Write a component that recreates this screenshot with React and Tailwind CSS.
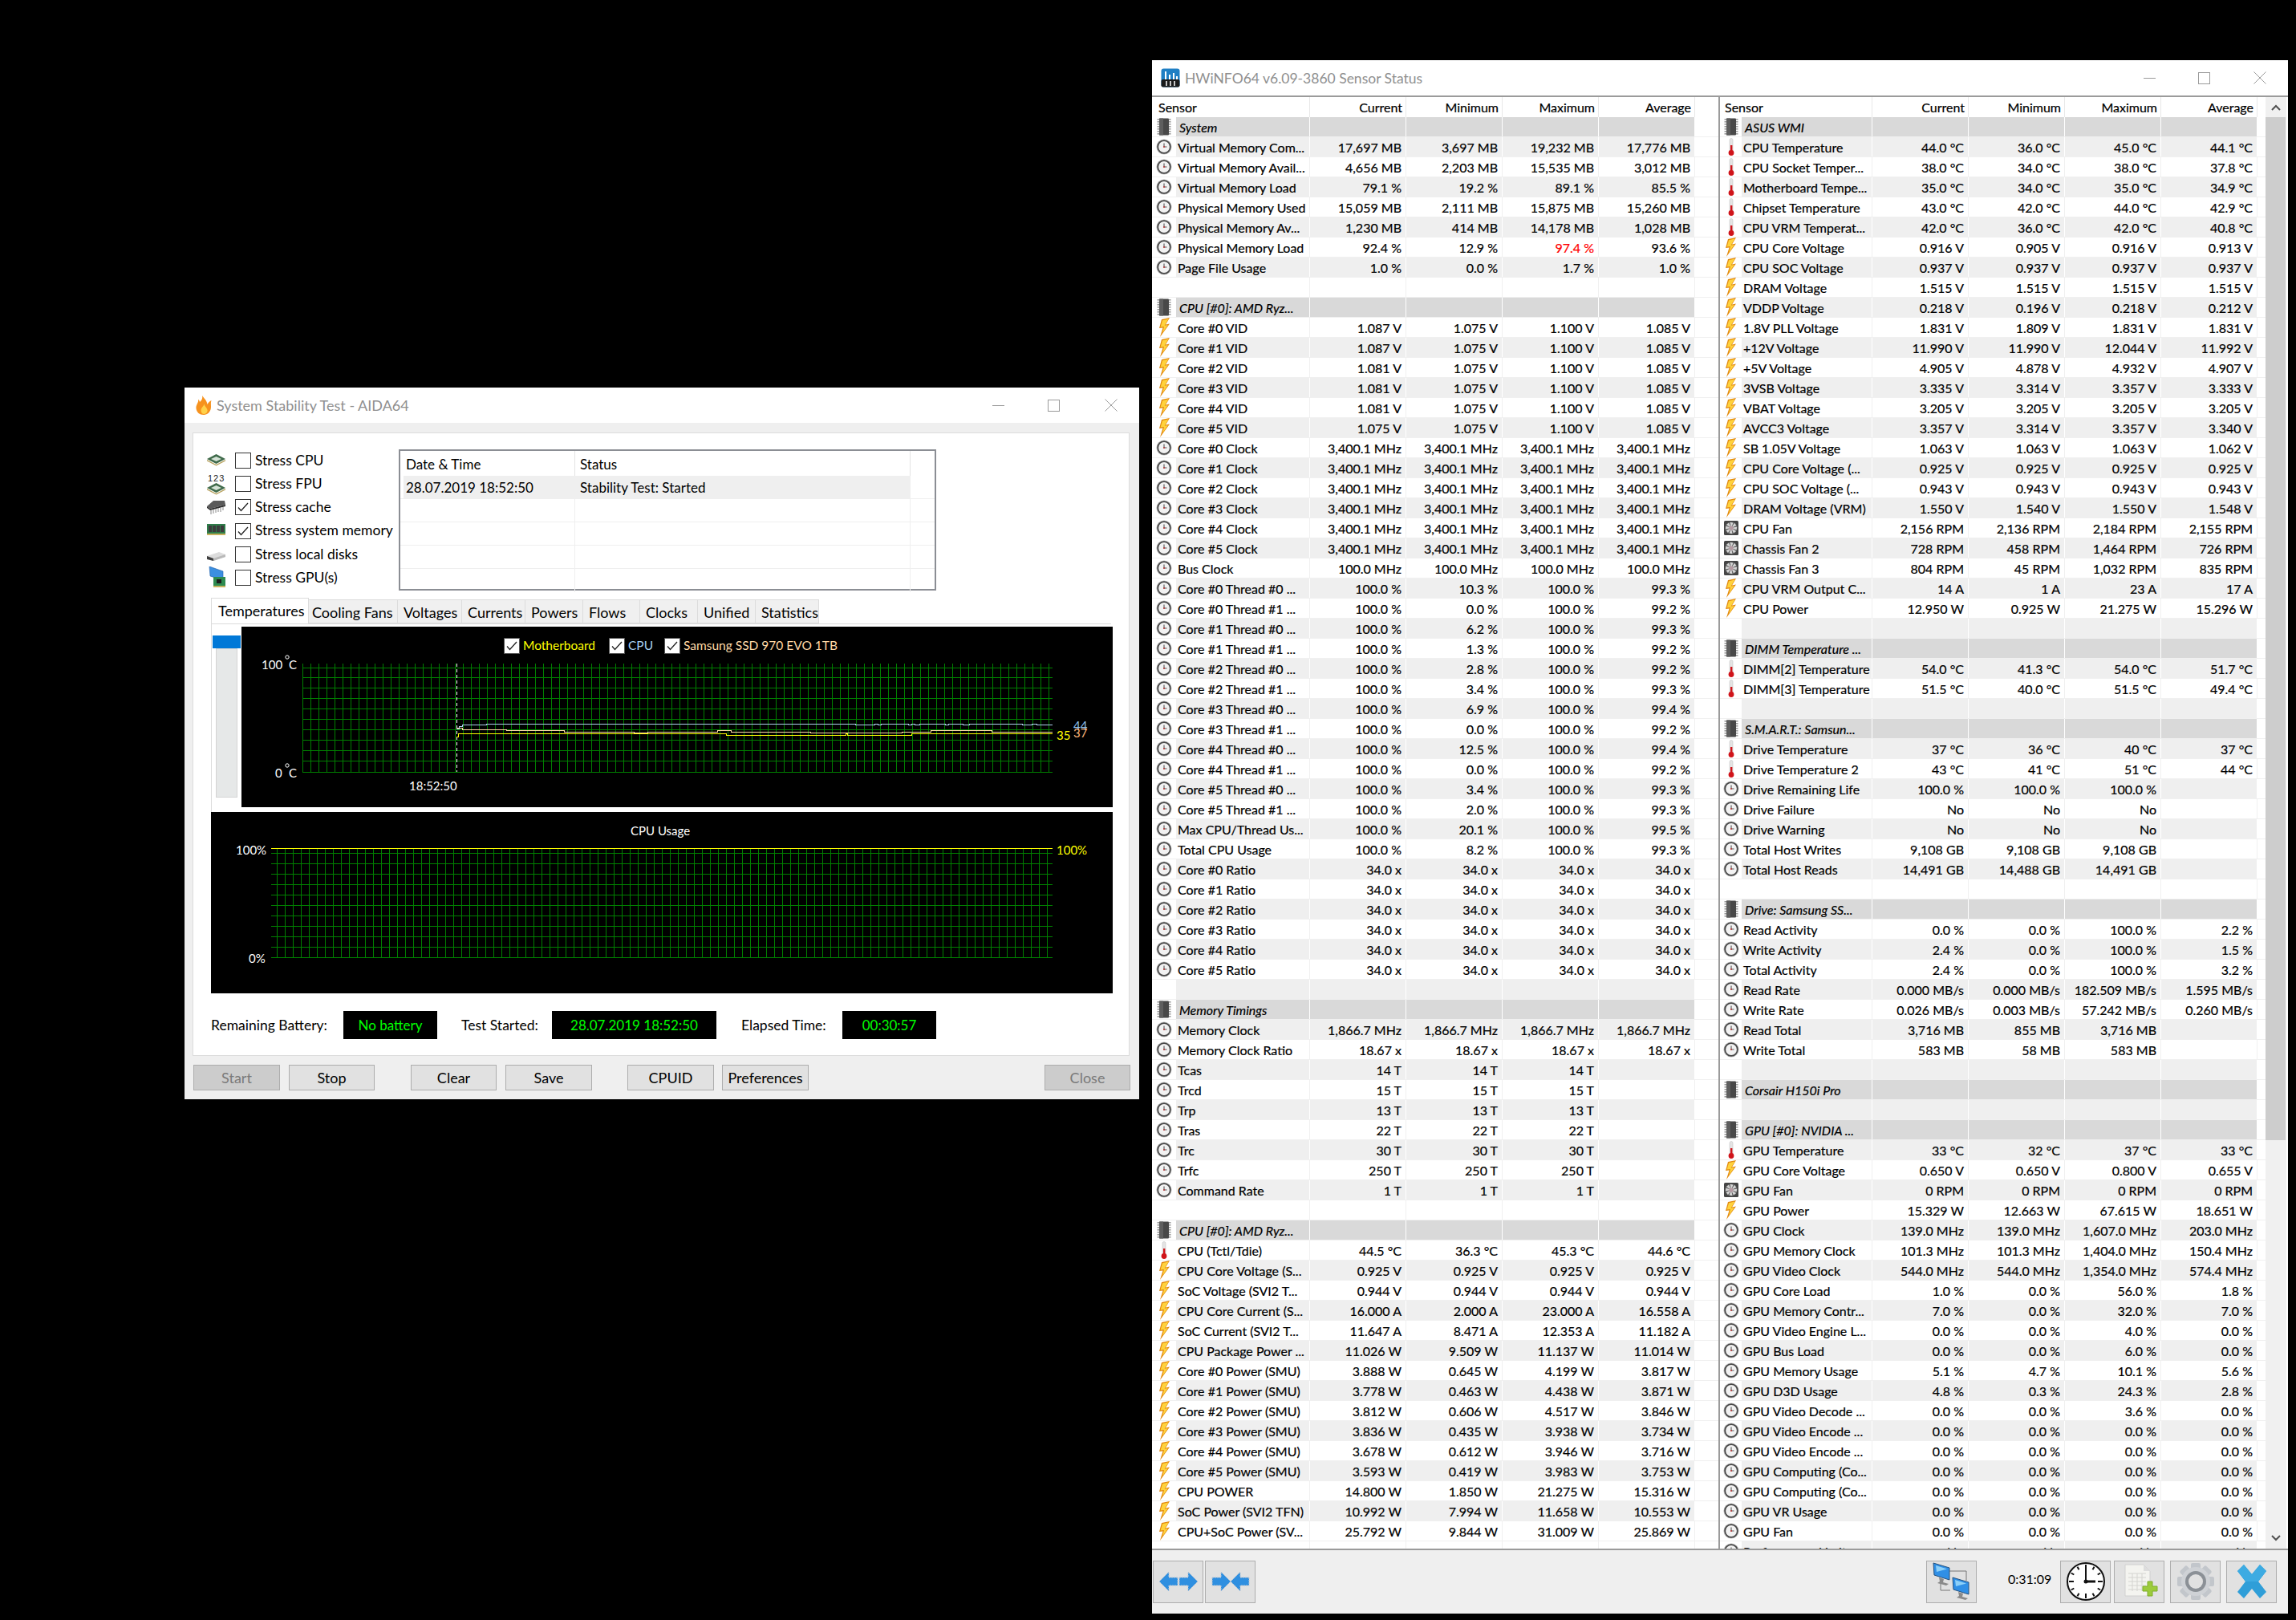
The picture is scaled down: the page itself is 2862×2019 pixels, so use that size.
import React from "react";

const F = "font-['Lato','Noto_Sans',sans-serif]";

const LEFT = [
["s","System"],
["c","Virtual Memory Com...","17,697 MB","3,697 MB","19,232 MB","17,776 MB"],
["c","Virtual Memory Avail...","4,656 MB","2,203 MB","15,535 MB","3,012 MB"],
["c","Virtual Memory Load","79.1 %","19.2 %","89.1 %","85.5 %"],
["c","Physical Memory Used","15,059 MB","2,111 MB","15,875 MB","15,260 MB"],
["c","Physical Memory Av...","1,230 MB","414 MB","14,178 MB","1,028 MB"],
["c","Physical Memory Load","92.4 %","12.9 %","97.4 %","93.6 %"],
["c","Page File Usage","1.0 %","0.0 %","1.7 %","1.0 %"],
[""],
["s","CPU [#0]: AMD Ryz..."],
["b","Core #0 VID","1.087 V","1.075 V","1.100 V","1.085 V"],
["b","Core #1 VID","1.087 V","1.075 V","1.100 V","1.085 V"],
["b","Core #2 VID","1.081 V","1.075 V","1.100 V","1.085 V"],
["b","Core #3 VID","1.081 V","1.075 V","1.100 V","1.085 V"],
["b","Core #4 VID","1.081 V","1.075 V","1.100 V","1.085 V"],
["b","Core #5 VID","1.075 V","1.075 V","1.100 V","1.085 V"],
["c","Core #0 Clock","3,400.1 MHz","3,400.1 MHz","3,400.1 MHz","3,400.1 MHz"],
["c","Core #1 Clock","3,400.1 MHz","3,400.1 MHz","3,400.1 MHz","3,400.1 MHz"],
["c","Core #2 Clock","3,400.1 MHz","3,400.1 MHz","3,400.1 MHz","3,400.1 MHz"],
["c","Core #3 Clock","3,400.1 MHz","3,400.1 MHz","3,400.1 MHz","3,400.1 MHz"],
["c","Core #4 Clock","3,400.1 MHz","3,400.1 MHz","3,400.1 MHz","3,400.1 MHz"],
["c","Core #5 Clock","3,400.1 MHz","3,400.1 MHz","3,400.1 MHz","3,400.1 MHz"],
["c","Bus Clock","100.0 MHz","100.0 MHz","100.0 MHz","100.0 MHz"],
["c","Core #0 Thread #0 ...","100.0 %","10.3 %","100.0 %","99.3 %"],
["c","Core #0 Thread #1 ...","100.0 %","0.0 %","100.0 %","99.2 %"],
["c","Core #1 Thread #0 ...","100.0 %","6.2 %","100.0 %","99.3 %"],
["c","Core #1 Thread #1 ...","100.0 %","1.3 %","100.0 %","99.2 %"],
["c","Core #2 Thread #0 ...","100.0 %","2.8 %","100.0 %","99.2 %"],
["c","Core #2 Thread #1 ...","100.0 %","3.4 %","100.0 %","99.3 %"],
["c","Core #3 Thread #0 ...","100.0 %","6.9 %","100.0 %","99.4 %"],
["c","Core #3 Thread #1 ...","100.0 %","0.0 %","100.0 %","99.2 %"],
["c","Core #4 Thread #0 ...","100.0 %","12.5 %","100.0 %","99.4 %"],
["c","Core #4 Thread #1 ...","100.0 %","0.0 %","100.0 %","99.2 %"],
["c","Core #5 Thread #0 ...","100.0 %","3.4 %","100.0 %","99.3 %"],
["c","Core #5 Thread #1 ...","100.0 %","2.0 %","100.0 %","99.3 %"],
["c","Max CPU/Thread Us...","100.0 %","20.1 %","100.0 %","99.5 %"],
["c","Total CPU Usage","100.0 %","8.2 %","100.0 %","99.3 %"],
["c","Core #0 Ratio","34.0 x","34.0 x","34.0 x","34.0 x"],
["c","Core #1 Ratio","34.0 x","34.0 x","34.0 x","34.0 x"],
["c","Core #2 Ratio","34.0 x","34.0 x","34.0 x","34.0 x"],
["c","Core #3 Ratio","34.0 x","34.0 x","34.0 x","34.0 x"],
["c","Core #4 Ratio","34.0 x","34.0 x","34.0 x","34.0 x"],
["c","Core #5 Ratio","34.0 x","34.0 x","34.0 x","34.0 x"],
[""],
["s","Memory Timings"],
["c","Memory Clock","1,866.7 MHz","1,866.7 MHz","1,866.7 MHz","1,866.7 MHz"],
["c","Memory Clock Ratio","18.67 x","18.67 x","18.67 x","18.67 x"],
["c","Tcas","14 T","14 T","14 T",""],
["c","Trcd","15 T","15 T","15 T",""],
["c","Trp","13 T","13 T","13 T",""],
["c","Tras","22 T","22 T","22 T",""],
["c","Trc","30 T","30 T","30 T",""],
["c","Trfc","250 T","250 T","250 T",""],
["c","Command Rate","1 T","1 T","1 T",""],
[""],
["s","CPU [#0]: AMD Ryz..."],
["t","CPU (Tctl/Tdie)","44.5 °C","36.3 °C","45.3 °C","44.6 °C"],
["b","CPU Core Voltage (S...","0.925 V","0.925 V","0.925 V","0.925 V"],
["b","SoC Voltage (SVI2 T...","0.944 V","0.944 V","0.944 V","0.944 V"],
["b","CPU Core Current (S...","16.000 A","2.000 A","23.000 A","16.558 A"],
["b","SoC Current (SVI2 T...","11.647 A","8.471 A","12.353 A","11.182 A"],
["b","CPU Package Power ...","11.026 W","9.509 W","11.137 W","11.014 W"],
["b","Core #0 Power (SMU)","3.888 W","0.645 W","4.199 W","3.817 W"],
["b","Core #1 Power (SMU)","3.778 W","0.463 W","4.438 W","3.871 W"],
["b","Core #2 Power (SMU)","3.812 W","0.606 W","4.517 W","3.846 W"],
["b","Core #3 Power (SMU)","3.836 W","0.435 W","3.938 W","3.734 W"],
["b","Core #4 Power (SMU)","3.678 W","0.612 W","3.946 W","3.716 W"],
["b","Core #5 Power (SMU)","3.593 W","0.419 W","3.983 W","3.753 W"],
["b","CPU POWER","14.800 W","1.850 W","21.275 W","15.316 W"],
["b","SoC Power (SVI2 TFN)","10.992 W","7.994 W","11.658 W","10.553 W"],
["b","CPU+SoC Power (SV...","25.792 W","9.844 W","31.009 W","25.869 W"],
];

const RIGHT = [
["s","ASUS WMI"],
["t","CPU Temperature","44.0 °C","36.0 °C","45.0 °C","44.1 °C"],
["t","CPU Socket Temper...","38.0 °C","34.0 °C","38.0 °C","37.8 °C"],
["t","Motherboard Tempe...","35.0 °C","34.0 °C","35.0 °C","34.9 °C"],
["t","Chipset Temperature","43.0 °C","42.0 °C","44.0 °C","42.9 °C"],
["t","CPU VRM Temperat...","42.0 °C","36.0 °C","42.0 °C","40.8 °C"],
["b","CPU Core Voltage","0.916 V","0.905 V","0.916 V","0.913 V"],
["b","CPU SOC Voltage","0.937 V","0.937 V","0.937 V","0.937 V"],
["b","DRAM Voltage","1.515 V","1.515 V","1.515 V","1.515 V"],
["b","VDDP Voltage","0.218 V","0.196 V","0.218 V","0.212 V"],
["b","1.8V PLL Voltage","1.831 V","1.809 V","1.831 V","1.831 V"],
["b","+12V Voltage","11.990 V","11.990 V","12.044 V","11.992 V"],
["b","+5V Voltage","4.905 V","4.878 V","4.932 V","4.907 V"],
["b","3VSB Voltage","3.335 V","3.314 V","3.357 V","3.333 V"],
["b","VBAT Voltage","3.205 V","3.205 V","3.205 V","3.205 V"],
["b","AVCC3 Voltage","3.357 V","3.314 V","3.357 V","3.340 V"],
["b","SB 1.05V Voltage","1.063 V","1.063 V","1.063 V","1.062 V"],
["b","CPU Core Voltage (...","0.925 V","0.925 V","0.925 V","0.925 V"],
["b","CPU SOC Voltage (...","0.943 V","0.943 V","0.943 V","0.943 V"],
["b","DRAM Voltage (VRM)","1.550 V","1.540 V","1.550 V","1.548 V"],
["f","CPU Fan","2,156 RPM","2,136 RPM","2,184 RPM","2,155 RPM"],
["f","Chassis Fan 2","728 RPM","458 RPM","1,464 RPM","726 RPM"],
["f","Chassis Fan 3","804 RPM","45 RPM","1,032 RPM","835 RPM"],
["b","CPU VRM Output C...","14 A","1 A","23 A","17 A"],
["b","CPU Power","12.950 W","0.925 W","21.275 W","15.296 W"],
[""],
["s","DIMM Temperature ..."],
["t","DIMM[2] Temperature","54.0 °C","41.3 °C","54.0 °C","51.7 °C"],
["t","DIMM[3] Temperature","51.5 °C","40.0 °C","51.5 °C","49.4 °C"],
[""],
["s","S.M.A.R.T.: Samsun..."],
["t","Drive Temperature","37 °C","36 °C","40 °C","37 °C"],
["t","Drive Temperature 2","43 °C","41 °C","51 °C","44 °C"],
["c","Drive Remaining Life","100.0 %","100.0 %","100.0 %",""],
["c","Drive Failure","No","No","No",""],
["c","Drive Warning","No","No","No",""],
["c","Total Host Writes","9,108 GB","9,108 GB","9,108 GB",""],
["c","Total Host Reads","14,491 GB","14,488 GB","14,491 GB",""],
[""],
["s","Drive: Samsung SS..."],
["c","Read Activity","0.0 %","0.0 %","100.0 %","2.2 %"],
["c","Write Activity","2.4 %","0.0 %","100.0 %","1.5 %"],
["c","Total Activity","2.4 %","0.0 %","100.0 %","3.2 %"],
["c","Read Rate","0.000 MB/s","0.000 MB/s","182.509 MB/s","1.595 MB/s"],
["c","Write Rate","0.026 MB/s","0.003 MB/s","57.242 MB/s","0.260 MB/s"],
["c","Read Total","3,716 MB","855 MB","3,716 MB",""],
["c","Write Total","583 MB","58 MB","583 MB",""],
[""],
["s","Corsair H150i Pro"],
[""],
["s","GPU [#0]: NVIDIA ..."],
["t","GPU Temperature","33 °C","32 °C","37 °C","33 °C"],
["b","GPU Core Voltage","0.650 V","0.650 V","0.800 V","0.655 V"],
["f","GPU Fan","0 RPM","0 RPM","0 RPM","0 RPM"],
["b","GPU Power","15.329 W","12.663 W","67.615 W","18.651 W"],
["c","GPU Clock","139.0 MHz","139.0 MHz","1,607.0 MHz","203.0 MHz"],
["c","GPU Memory Clock","101.3 MHz","101.3 MHz","1,404.0 MHz","150.4 MHz"],
["c","GPU Video Clock","544.0 MHz","544.0 MHz","1,354.0 MHz","574.4 MHz"],
["c","GPU Core Load","1.0 %","0.0 %","56.0 %","1.8 %"],
["c","GPU Memory Contr...","7.0 %","0.0 %","32.0 %","7.0 %"],
["c","GPU Video Engine L...","0.0 %","0.0 %","4.0 %","0.0 %"],
["c","GPU Bus Load","0.0 %","0.0 %","6.0 %","0.0 %"],
["c","GPU Memory Usage","5.1 %","4.7 %","10.1 %","5.6 %"],
["c","GPU D3D Usage","4.8 %","0.3 %","24.3 %","2.8 %"],
["c","GPU Video Decode ...","0.0 %","0.0 %","3.6 %","0.0 %"],
["c","GPU Video Encode ...","0.0 %","0.0 %","0.0 %","0.0 %"],
["c","GPU Video Encode ...","0.0 %","0.0 %","0.0 %","0.0 %"],
["c","GPU Computing (Co...","0.0 %","0.0 %","0.0 %","0.0 %"],
["c","GPU Computing (Co...","0.0 %","0.0 %","0.0 %","0.0 %"],
["c","GPU VR Usage","0.0 %","0.0 %","0.0 %","0.0 %"],
["c","GPU Fan","0.0 %","0.0 %","0.0 %","0.0 %"],
["c","Performance Limit ...","No","No","No","No"],
];

function ClockIcon() {
  return (
    <svg width="20" height="20" viewBox="0 0 20 20" className="shrink-0">
      <circle cx="10" cy="10" r="9.600" fill="#bdbdbd" />
      <circle cx="10" cy="10" r="7.800" fill="#f2f2f2" stroke="#484848" strokeWidth="1.800" />
      <path d="M10 5.500V10H13.500" fill="none" stroke="#555" strokeWidth="1.100" />
      <circle cx="10" cy="10" r="1" fill="#b33" />
    </svg>
  );
}
function BoltIcon() {
  return (
    <svg width="15" height="24" viewBox="0 0 15 24" className="shrink-0">
      <polygon points="14,0 4,2 1,13 5.500,12.500 2,24 14,7.500 9,8.500" fill="#e28a10" />
      <polygon points="12.500,1.500 5,3.200 2.600,11.600 7,11 5,19 11.800,9 7.600,9.800" fill="#ffd23c" />
    </svg>
  );
}
function ThermIcon() {
  return (
    <svg width="10" height="23" viewBox="0 0 10 23" className="shrink-0">
      <rect x="3" y="0.500" width="4" height="20" rx="2" fill="#e4e4e4" stroke="#c4c4c4" strokeWidth="0.600" />
      <rect x="4" y="9" width="2.400" height="9" fill="#d0141a" />
      <circle cx="5" cy="18.500" r="3.400" fill="#d0141a" />
    </svg>
  );
}
function ChipIcon() {
  return (
    <svg width="18" height="22" viewBox="0 0 18 22" className="shrink-0">
      <rect x="3" y="0.500" width="12" height="21" rx="1" fill="#484848" />
      <rect x="3" y="0.500" width="5" height="21" fill="#5e5e5e" />
      {[2, 5, 8, 11, 14, 17, 20].map((y) => (
        <g key={y}>
          <rect x="0.500" y={y - 1} width="2.500" height="1.600" fill="#9b9b9b" />
          <rect x="15" y={y - 1} width="2.500" height="1.600" fill="#9b9b9b" />
        </g>
      ))}
    </svg>
  );
}
function FanIcon() {
  return (
    <svg width="18" height="18" viewBox="0 0 18 18" className="shrink-0">
      <rect width="18" height="18" rx="1.500" fill="#454545" />
      <circle cx="9" cy="9" r="7.800" fill="#5a5a5a" />
      {[0, 45, 90, 135, 180, 225, 270, 315].map((a) => (
        <path key={a} d="M9 9 L7.500 1.800 L11.500 2.400 Z" fill="#d4d4d4" transform={`rotate(${a} 9 9)`} />
      ))}
      <circle cx="9" cy="9" r="2.600" fill="#b59aa2" />
    </svg>
  );
}
function RowIcon({ k }) {
  if (k === "c") return <ClockIcon />;
  if (k === "b") return <BoltIcon />;
  if (k === "t") return <ThermIcon />;
  if (k === "f") return <FanIcon />;
  if (k === "s") return <ChipIcon />;
  return null;
}

function Row({ r, i, iconW, nameW, filler }) {
  const section = r[0] === "s";
  const gray = i % 2 === 1;
  const bg = section ? "bg-[#d9d9d9]" : gray ? "bg-[#efefef]" : "bg-white";
  const line = section || gray ? "border-white" : "border-[#f0f0f0]";
  const vals = [r[2], r[3], r[4], r[5]];
  return (
    <div className="flex h-[25px] shrink-0 border-b border-[#f0f0f0]">
      <div className="flex items-center justify-center bg-white shrink-0" style={{ width: iconW }}>
        <RowIcon k={r[0]} />
      </div>
      <div
        className={`flex items-center shrink-0 pl-[2px] pt-[1px] whitespace-nowrap overflow-hidden border-r ${bg} ${line} ${section ? "italic pl-[4px]" : ""}`}
        style={{ width: nameW }}
      >
        {r[1]}
      </div>
      {vals.map((v, j) => (
        <div
          key={j}
          className={`flex items-center justify-end w-[120px] shrink-0 pr-[5px] pt-[1px] border-r ${bg} ${line} ${v === "97.4 %" ? "text-[#ff0000]" : ""}`}
        >
          {v}
        </div>
      ))}
      <div className="shrink-0" style={{ width: filler }} />
    </div>
  );
}

function SensorPanel({ rows, iconW, nameW, filler, hdrPad, blankEnd }) {
  const heads = ["Current", "Minimum", "Maximum", "Average"];
  return (
    <div className="flex flex-col h-full overflow-hidden text-[16px] leading-[20px] text-black [-webkit-text-stroke-width:0.2px]">
      <div className="flex h-[25px] shrink-0">
        <div className="flex items-center border-r border-[#e8e8e8] shrink-0" style={{ width: iconW + nameW, paddingLeft: hdrPad }}>
          Sensor
        </div>
        {heads.map((h) => (
          <div key={h} className="flex items-center justify-end w-[120px] shrink-0 pr-[4px] border-r border-[#e8e8e8]">
            {h}
          </div>
        ))}
      </div>
      {rows.map((r, i) => (
        <Row key={i} r={r} i={i} iconW={iconW} nameW={nameW} filler={filler} />
      ))}
      {blankEnd && (
        <div className="flex flex-1">
          <div className="border-r border-[#f0f0f0]" style={{ width: iconW + nameW }} />
          {heads.map((h) => (
            <div key={h} className="w-[120px] border-r border-[#f0f0f0]" />
          ))}
        </div>
      )}
    </div>
  );
}

function WinControls({ gapA, gapB, right }) {
  return (
    <div className="flex items-center ml-auto" style={{ marginRight: right }}>
      <div className="w-[15px] h-[1px] bg-[#9a9a9a]" style={{ marginRight: gapA }} />
      <div className="w-[15px] h-[15px] border border-[#9a9a9a]" style={{ marginRight: gapB }} />
      <svg width="16" height="16" viewBox="0 0 16 16">
        <path d="M0.500 0.500L15.500 15.500M15.500 0.500L0.500 15.500" stroke="#9a9a9a" strokeWidth="1" fill="none" />
      </svg>
    </div>
  );
}

function Flame() {
  return (
    <svg width="20" height="24" viewBox="0 0 20 24" className="shrink-0">
      <path d="M8 0C9 4 7 6 5 8 4.500 6 4 5 3 5 4 9 0 11 0.500 16 1 21 5 24 9.500 24 15 24 19 20 19 14 19 11 18.500 9 19.500 6 17 7 15.500 9 14.500 11 14 7 11 4 8 0Z" fill="#f6921e" />
      <path d="M10 10C11 13 7 14 6.500 18 6.500 21 8 23 10.500 23 13.500 23 15 20 14.500 18 14 15 11.500 14 10 10Z" fill="#ffd24a" />
    </svg>
  );
}

function Chk({ on }) {
  return (
    <div className="w-[20px] h-[20px] border border-[#333] bg-white flex items-center justify-center shrink-0">
      {on && (
        <svg width="14" height="12" viewBox="0 0 14 12">
          <path d="M1 6.500L4.500 10.500L13 1" stroke="#222" strokeWidth="1.300" fill="none" />
        </svg>
      )}
    </div>
  );
}

function MiniChip({ y = 0 }) {
  return (
    <g transform={`translate(0 ${y})`}>
      <path d="M0 7L11.500 1L23 7L11.500 13Z" fill="#3f6a4a" />
      <path d="M5 7L11.500 4L18 7L11.500 10Z" fill="#d4e2d6" />
      <path d="M0 8L11.500 14L23 8V9.500L11.500 15.500L0 9.500Z" fill="#b6a15e" />
    </g>
  );
}
function StressIcon({ k }) {
  return (
    <svg width="24" height="28" viewBox="0 0 24 28" className="shrink-0">
      {k === 0 && <MiniChip y={5} />}
      {k === 1 && (
        <g>
          <text x="1" y="11" fontSize="11" fontFamily="Liberation Sans" letterSpacing="1" fill="#222">123</text>
          <MiniChip y={12} />
        </g>
      )}
      {k === 2 && (
        <g>
          <path d="M0 13L8 6H22L23 11L4 16Z" fill="#5a5a5a" />
          <path d="M0 13L4 16L23 11V13L4 18L0 15Z" fill="#2e2e2e" />
          <path d="M5 18V23M8 17V22M11 16V21M14 15V20M17 15V20M20 14V18" stroke="#888" strokeWidth="1" />
        </g>
      )}
      {k === 3 && (
        <g>
          <rect x="0" y="5" width="23" height="14" fill="#2f7d4a" />
          <rect x="2" y="7" width="4" height="8" fill="#3c3c3c" />
          <rect x="7" y="7" width="4" height="8" fill="#3c3c3c" />
          <rect x="12" y="7" width="4" height="8" fill="#3c3c3c" />
          <rect x="17" y="7" width="4" height="8" fill="#3c3c3c" />
          <rect x="0" y="17" width="23" height="2" fill="#c7b25e" />
        </g>
      )}
      {k === 4 && (
        <g>
          <path d="M0 16L15 11L23 14V17L8 22L0 20Z" fill="#dcdcdc" />
          <path d="M0 16L8 19V22L0 20Z" fill="#3f3f3f" />
          <path d="M8 19L23 14V17L8 22Z" fill="#b9b9b9" />
        </g>
      )}
      {k === 5 && (
        <g>
          <path d="M3 0L20 6V17L4 12Z" fill="#3c8fe0" stroke="#1f5ea8" strokeWidth="0.600" />
          <rect x="8" y="13" width="15" height="12" fill="#2e8b4f" />
          <rect x="12" y="16" width="6" height="5" fill="#1c1c1c" />
          <rect x="8" y="24" width="15" height="2" fill="#c7b25e" />
        </g>
      )}
    </svg>
  );
}

const STRESS = [
  ["Stress CPU", false],
  ["Stress FPU", false],
  ["Stress cache", true],
  ["Stress system memory", true],
  ["Stress local disks", false],
  ["Stress GPU(s)", false],
];

const TABS = [
  ["Temperatures", 122, 8],
  ["Cooling Fans", 111, 4],
  ["Voltages", 80, 7],
  ["Currents", 79, 7],
  ["Powers", 72, 7],
  ["Flows", 71, 7],
  ["Clocks", 72, 7],
  ["Unified", 72, 7],
  ["Statistics", 79, 7],
];

function Range(a, b, s) {
  const out = [];
  for (let v = a; v <= b + 0.01; v += s) out.push(v);
  return out;
}

function stepPath(segs, xEnd) {
  let d = "";
  segs.forEach(([x, y], i) => {
    const nx = i + 1 < segs.length ? segs[i + 1][0] : xEnd;
    d += `${i === 0 ? "M" : "L"}${x} ${y}L${nx} ${y}`;
  });
  return d;
}
const BLUE = [[569, 908], [572, 905], [576, 903], [604, 903], [606, 902], [615, 902.500], [621, 902], [1064, 902], [1066, 903], [1090, 902], [1094, 903], [1098, 902], [1132, 903], [1136, 902], [1140, 903], [1146, 902], [1170, 902], [1178, 903], [1182, 902], [1200, 903], [1208, 902], [1264, 902], [1274, 903], [1286, 902], [1292, 903]];
const PEACH = [[569, 907], [576, 909], [631, 910], [703, 912], [790, 913], [807, 912], [894, 910], [911, 912], [1010, 913], [1124, 912], [1160, 910], [1236, 912]];
const YELL = [[569, 918], [571, 914], [900, 914], [905, 916], [1052, 916], [1054, 914], [1056, 916], [1134, 916], [1136, 914]];

const X1 = 301, Y1 = 781, X2 = 263, Y2 = 1012;

function Chart1() {
  const v = Range(377, 1307, 10);
  const h = [832, 844, 857, 870, 883, 896, 909, 922, 935, 948, 962];
  return (
    <svg width="1086" height="225" viewBox={`${X1} ${Y1} 1086 225`} className="block bg-black" fontFamily="Lato" fontSize="15">
      <g stroke="#008000" strokeWidth="1" shapeRendering="crispEdges">
        {v.map((x) => <line key={x} x1={x} x2={x} y1="827" y2="962" />)}
        {h.map((y) => <line key={y} x1="377" x2="1312" y1={y} y2={y} />)}
      </g>
      <line x1="569" x2="569" y1="827" y2="962" stroke="#fff" strokeWidth="1" strokeDasharray="4 3" shapeRendering="crispEdges" />
      <g fill="none" strokeWidth="1" shapeRendering="crispEdges">
        <path d={stepPath(BLUE, 1312)} stroke="#aecfee" />
        <path d={stepPath(PEACH, 1312)} stroke="#ffd9a6" />
        <path d={stepPath(YELL, 1312)} stroke="#ffff00" />
      </g>
      <text x="326" y="834" fill="#fff">100</text>
      <circle cx="358" cy="819" r="2.200" fill="none" stroke="#fff" strokeWidth="1" />
      <text x="360" y="834" fill="#fff">C</text>
      <text x="343" y="969" fill="#fff">0</text>
      <circle cx="358" cy="954" r="2.200" fill="none" stroke="#fff" strokeWidth="1" />
      <text x="360" y="969" fill="#fff">C</text>
      <text x="510" y="985" fill="#fff">18:52:50</text>
      <text x="1317" y="922" fill="#ffff00">35</text>
      <text x="1338" y="910" fill="#8fc0ee">44</text>
      <text x="1338" y="919" fill="#ffb77a">37</text>
    </svg>
  );
}

function Legend({ text, cls, w }) {
  return (
    <div className="flex items-center gap-[4px]" style={{ width: w }}>
      <div className="w-[20px] h-[20px] bg-white border border-[#555] flex items-center justify-center shrink-0">
        <svg width="14" height="12" viewBox="0 0 14 12">
          <path d="M1 6.500L4.500 10.500L13 1" stroke="#222" strokeWidth="1.300" fill="none" />
        </svg>
      </div>
      <span className={`text-[15.500px] whitespace-nowrap ${cls}`}>{text}</span>
    </div>
  );
}

function Chart2() {
  const v = Range(345, 1305, 10);
  const h = Range(1063, 1193, 13);
  return (
    <svg width="1124" height="226" viewBox={`${X2} ${Y2} 1124 226`} className="block bg-black" fontFamily="Lato" fontSize="15">
      <g stroke="#008000" strokeWidth="1" shapeRendering="crispEdges">
        {v.map((x) => <line key={x} x1={x} x2={x} y1="1058" y2="1193" />)}
        {h.map((y) => <line key={y} x1="338" x2="1312" y1={y} y2={y} />)}
      </g>
      <line x1="338" x2="1312" y1="1057" y2="1057" stroke="#ffff00" strokeWidth="1" shapeRendering="crispEdges" />
      <text x="786" y="1041" fill="#fff">CPU Usage</text>
      <text x="294" y="1065" fill="#fff">100%</text>
      <text x="310" y="1200" fill="#fff">0%</text>
      <text x="1317" y="1065" fill="#ffff00">100%</text>
    </svg>
  );
}

function Btn({ label, w, off, ml }) {
  return (
    <div
      className={`h-[32px] shrink-0 flex items-center justify-center border border-[#adadad] text-[18px] ${off ? "bg-[#cccccc] text-[#7a7a7a]" : "bg-[#e1e1e1] text-black"}`}
      style={{ width: w, marginLeft: ml }}
    >
      {label}
    </div>
  );
}

function Aida() {
  return (
    <div className={`absolute left-[230px] top-[483px] w-[1190px] h-[887px] flex flex-col bg-[#efefef] text-black ${F}`}>
      <div className="flex items-center h-[44px] bg-white shrink-0 pl-[14px]">
        <Flame />
        <span className="ml-[6px] text-[18px] text-[#8f8f8f]">System Stability Test - AIDA64</span>
        <WinControls gapA="54px" gapB="56px" right="27px" />
      </div>
      <div className="ml-[10px] mt-[12px] w-[1168px] h-[777px] bg-white border border-[#dcdcdc] shrink-0 flex flex-col">
        <div className="flex h-[205px] shrink-0 pl-[17px] pt-[20px]">
          <div className="w-[239px] shrink-0 -mt-[1px] flex flex-col overflow-hidden text-[17.500px]">
            {STRESS.map(([t, on], i) => (
              <div key={t} className="flex items-center h-[29.300px] whitespace-nowrap shrink-0">
                <StressIcon k={i} />
                <div className="ml-[11px]"><Chk on={on} /></div>
                <span className="ml-[5px]">{t}</span>
              </div>
            ))}
          </div>
          <div className="w-[670px] h-[176px] shrink-0 border-2 border-[#8b8e94] flex flex-col text-[17px]">
            <div className="flex h-[31px] shrink-0">
              <div className="w-[218px] border-r border-[#e4e4e4] pl-[7px] pt-[2px] flex items-center shrink-0">Date &amp; Time</div>
              <div className="w-[418px] border-r border-[#e4e4e4] pl-[6px] pt-[2px] flex items-center shrink-0">Status</div>
            </div>
            <div className="flex h-[29px] shrink-0 border-b border-[#efefef]">
              <div className="w-[4px] shrink-0" />
              <div className="w-[214px] bg-[#efefef] pl-[3px] pt-[1px] flex items-center shrink-0">28.07.2019 18:52:50</div>
              <div className="w-[418px] bg-[#efefef] pl-[6px] pt-[1px] flex items-center shrink-0">Stability Test: Started</div>
            </div>
            {[0, 1, 2, 3].map((i) => (
              <div key={i} className="flex h-[29px] shrink-0 border-b border-[#efefef] last:border-b-0">
                <div className="w-[218px] border-r border-[#efefef] shrink-0" />
                <div className="w-[418px] border-r border-[#efefef] shrink-0" />
              </div>
            ))}
          </div>
        </div>
        <div className="flex items-end h-[32px] shrink-0 ml-[22px] text-[18px]">
          {TABS.map(([t, w, p], i) => (
            <div
              key={t}
              className={`flex items-center shrink-0 whitespace-nowrap border border-[#dcdcdc] ${i === 0 ? "h-[32px] bg-white border-b-0" : "h-[30px] pt-[2px] bg-[#f0f0f0] border-l-0"}`}
              style={{ width: w, paddingLeft: p }}
            >
              {t}
            </div>
          ))}
        </div>
        <div className="ml-[22px] w-[1122px] h-[235px] shrink-0 border-t border-l border-[#dcdcdc] pt-[3px] flex">
          <div className="w-[37px] h-[202px] mt-[11px] shrink-0 flex flex-col pl-[1px]">
            <div className="w-[35px] h-[16px] bg-[#0078d7] shrink-0" />
            <div className="ml-[4px] w-[27px] h-[186px] bg-[#e6e8e8] border border-[#d4d4d4] shrink-0" />
          </div>
          <div className="relative w-[1086px] h-[225px] shrink-0">
            <Chart1 />
            <div className="absolute left-[327px] top-[12px] flex">
              <Legend text="Motherboard" cls="text-[#ffff00]" w="131px" />
              <Legend text="CPU" cls="text-[#a8d0f0]" w="69px" />
              <Legend text="Samsung SSD 970 EVO 1TB" cls="text-[#ffd9a6]" w="240px" />
            </div>
          </div>
        </div>
        <div className="ml-[22px] shrink-0">
          <Chart2 />
        </div>
        <div className="flex items-center ml-[22px] mt-[22px] h-[35px] text-[17.500px] shrink-0">
          <span className="w-[165px] pt-[2px] whitespace-nowrap">Remaining Battery:</span>
          <div className="w-[117px] h-[35px] bg-black text-[#00ff00] text-[17px] flex items-center justify-center">No battery</div>
          <span className="w-[143px] pl-[30px] pt-[2px] whitespace-nowrap">Test Started:</span>
          <div className="w-[205px] h-[35px] bg-black text-[#00ff00] text-[17px] flex items-center justify-center">28.07.2019 18:52:50</div>
          <span className="w-[157px] pl-[31px] pt-[2px] whitespace-nowrap">Elapsed Time:</span>
          <div className="w-[117px] h-[35px] bg-black text-[#00ff00] text-[17px] flex items-center justify-center">00:30:57</div>
        </div>
      </div>
      <div className="flex ml-[11px] mt-[11px] shrink-0">
        <Btn label="Start" w="108px" off />
        <Btn label="Stop" w="107px" ml="11px" />
        <Btn label="Clear" w="107px" ml="45px" />
        <Btn label="Save" w="108px" ml="11px" />
        <Btn label="CPUID" w="108px" ml="44px" />
        <Btn label="Preferences" w="108px" ml="10px" />
        <Btn label="Close" w="107px" ml="294px" off />
      </div>
    </div>
  );
}

function ToolBtn({ children, ml }) {
  return (
    <div className="w-[63px] h-[53px] bg-[#e1e1e1] border border-[#adadad] flex items-center justify-center shrink-0" style={{ marginLeft: ml }}>
      {children}
    </div>
  );
}

function Arrow({ x, dir }) {
  const p = dir > 0 ? "M0 7H11V0L23 12L11 24V17H0Z" : "M23 7H12V0L0 12L12 24V17H23Z";
  return <path d={p} transform={`translate(${x} 4)`} fill="#2f8fe0" stroke="#b9c6d4" strokeWidth="1" strokeDasharray="2 1" />;
}

function Monitor({ x, y }) {
  return (
    <g transform={`translate(${x} ${y})`}>
      <path d="M1 1L21 7V22L2 16Z" fill="#2f8fe6" stroke="#26527f" strokeWidth="1" />
      <path d="M4 4L18 8.500L5 12Z" fill="#8dd0f8" />
      <path d="M8 19L14 21L13 25L20 27L17 29L6 26L9 24Z" fill="#8a8a8a" />
    </g>
  );
}

function HwFooter() {
  const ticks = Range(0, 330, 30);
  return (
    <div className="flex items-center h-[79px] bg-[#efefef] shrink-0 pl-[1px] pb-[1px]">
      <ToolBtn>
        <svg width="50" height="32" viewBox="0 0 50 32">
          <Arrow x={1} dir={-1} />
          <Arrow x={26} dir={1} />
        </svg>
      </ToolBtn>
      <ToolBtn ml="2px">
        <svg width="50" height="32" viewBox="0 0 50 32">
          <Arrow x={2} dir={1} />
          <Arrow x={25} dir={-1} />
        </svg>
      </ToolBtn>
      <ToolBtn ml="836px">
        <svg width="52" height="50" viewBox="0 0 52 50">
          <path d="M22 12H44V24" fill="none" stroke="#777" strokeWidth="1" />
          <path d="M12 26V36H24" fill="none" stroke="#777" strokeWidth="1" />
          <Monitor x={2} y={1} />
          <Monitor x={26} y={19} />
        </svg>
      </ToolBtn>
      <span className="w-[104px] pl-[39px] pb-[6px] text-[16px] whitespace-nowrap shrink-0">0:31:09</span>
      <ToolBtn>
        <svg width="50" height="50" viewBox="0 0 50 50">
          <circle cx="25" cy="25" r="23" fill="#fff" stroke="#111" strokeWidth="2" />
          {ticks.map((a) => (
            <line key={a} x1="25" y1="4" x2="25" y2={a % 90 === 0 ? "10" : "8"} stroke="#111" strokeWidth="2" transform={`rotate(${a} 25 25)`} />
          ))}
          <path d="M25 25V7" stroke="#111" strokeWidth="2" />
          <path d="M25 25H37" stroke="#111" strokeWidth="3" />
          <circle cx="25" cy="25" r="2.500" fill="#111" />
        </svg>
      </ToolBtn>
      <ToolBtn ml="4px">
        <svg width="46" height="48" viewBox="0 0 46 48">
          <path d="M5 3H28L36 11V42H5Z" fill="#f4f4f0" stroke="#d0d0d0" strokeWidth="1" />
          <path d="M28 3V11H36" fill="#dddddd" />
          <g stroke="#d4d4d0" strokeWidth="1">
            <path d="M9 14H31M9 19H31M9 24H31M9 29H31M9 34H31M14 14V36M20 14V36M26 14V36" />
          </g>
          <path d="M27 30H33V24H39V30H45V36H39V42H33V36H27Z" fill="#9ccb3c" stroke="#7fae2a" strokeWidth="1" />
        </svg>
      </ToolBtn>
      <ToolBtn ml="7px">
        <svg width="48" height="48" viewBox="0 0 48 48">
          <g fill="#c2c6cb">
            {[0, 45, 90, 135, 180, 225, 270, 315].map((a) => (
              <rect key={a} x="18" y="1" width="12" height="10" rx="2" transform={`rotate(${a} 24 24)`} />
            ))}
          </g>
          <circle cx="24" cy="24" r="18" fill="#cfd2d6" />
          <circle cx="24" cy="24" r="13" fill="#8b9096" />
          <circle cx="24" cy="24" r="9" fill="#e1e1e1" />
        </svg>
      </ToolBtn>
      <ToolBtn ml="7px">
        <svg width="40" height="44" viewBox="0 0 40 44">
          <path d="M10 1L20 13L30 1L38 9L28 22L38 35L30 43L20 31L10 43L2 35L12 22L2 9Z" fill="#2f9ed8" />
          <path d="M10 1L20 13L30 1L38 9L28 22H12L2 9Z" fill="#3dabe2" />
        </svg>
      </ToolBtn>
    </div>
  );
}

function Scrollbar() {
  return (
    <div className="w-[26px] h-full shrink-0 flex flex-col bg-[#f0f0f0]">
      <div className="h-[25px] shrink-0 flex items-center justify-center">
        <svg width="12" height="8" viewBox="0 0 12 8">
          <path d="M1 7L6 2L11 7" fill="none" stroke="#505050" strokeWidth="2" />
        </svg>
      </div>
      <div className="h-[1275px] w-[25px] bg-[#cdcdcd] shrink-0" />
      <div className="flex-1" />
      <div className="h-[26px] shrink-0 flex items-center justify-center">
        <svg width="12" height="8" viewBox="0 0 12 8">
          <path d="M1 1L6 6L11 1" fill="none" stroke="#505050" strokeWidth="2" />
        </svg>
      </div>
    </div>
  );
}

function HwInfo() {
  return (
    <div className={`absolute left-[1436px] top-[75px] w-[1416px] h-[1936px] flex flex-col bg-white text-black ${F}`}>
      <div className="flex items-center h-[44px] shrink-0 pl-[11px]">
        <svg width="24" height="24" viewBox="0 0 24 24" className="shrink-0">
          <rect x="0.500" y="0.500" width="23" height="23" rx="3" fill="#1f7fc4" />
          <rect x="0.500" y="14" width="23" height="9.500" rx="2" fill="#1a1a1a" />
          <path d="M6 4V14M11 8V14M16 6V14M20 10V14" stroke="#fff" strokeWidth="2" />
          <path d="M7 16V22M12 16V22M17 16V22" stroke="#fff" strokeWidth="1.500" />
        </svg>
        <span className="ml-[6px] pt-[2px] text-[17.500px] text-[#8f8f8f]">HWiNFO64 v6.09-3860 Sensor Status</span>
        <WinControls gapA="53px" gapB="54px" right="27px" />
      </div>
      <div className="flex h-[1813px] shrink-0 border-t-2 border-b-2 border-[#9b9b9b]">
        <div className="w-[708px] h-full shrink-0 border-r-2 border-[#9b9b9b]">
          <SensorPanel rows={LEFT} iconW={30} nameW={167} filler={29} hdrPad={8} blankEnd />
        </div>
        <div className="w-[680px] h-full shrink-0">
          <SensorPanel rows={RIGHT} iconW={27} nameW={163} filler={10} hdrPad={6} />
        </div>
        <Scrollbar />
      </div>
      <HwFooter />
    </div>
  );
}

export default function App() {
  return (
    <div className="relative w-[2862px] h-[2019px] bg-black overflow-hidden">
      <Aida />
      <HwInfo />
    </div>
  );
}
